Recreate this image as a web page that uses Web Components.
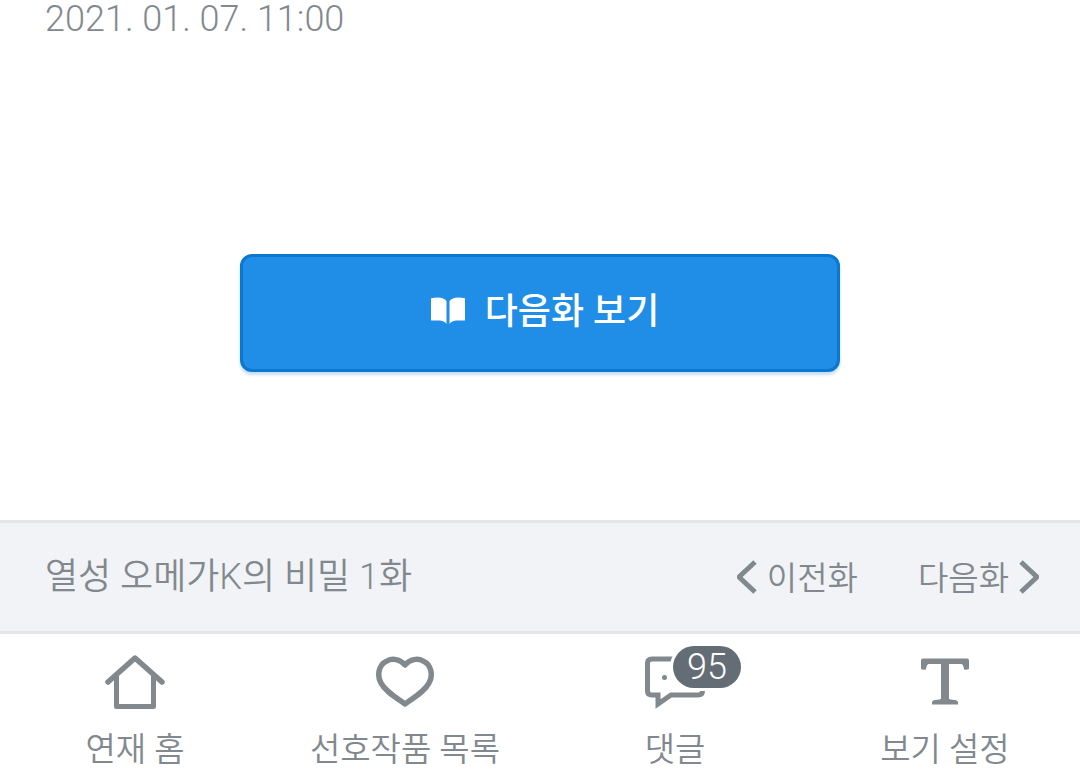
<!DOCTYPE html>
<html lang="ko">
<head>
<meta charset="UTF-8">
<meta name="viewport" content="width=device-width, initial-scale=1">
<title>열성 오메가K의 비밀 1화</title>
<style>
    body {
        margin: 0;
        --gray: #81898f;
        --line: #e4e5e9;
        --bar: #f2f3f6;
        color: var(--gray);
        background: #fff;
        font-family: Roboto, "Noto Sans CJK KR", sans-serif;
        font-weight: 350;
    }
</style>
</head>
<body>
<episode-viewer>
    <time slot="date" datetime="2021-01-07T11:00">2021. 01. 07. 11:00</time>
    <next-button slot="next">다음화 보기</next-button>
    <episode-bar slot="footer">
        <span slot="title">열성 오메가K의 비밀 1화</span>
        <episode-link slot="nav" dir-icon="prev">이전화</episode-link>
        <episode-link slot="nav" dir-icon="next">다음화</episode-link>
    </episode-bar>
    <viewer-menu slot="footer">
        <menu-item icon="home">연재 홈</menu-item>
        <menu-item icon="heart">선호작품 목록</menu-item>
        <menu-item icon="comment" count="95">댓글</menu-item>
        <menu-item icon="text">보기 설정</menu-item>
    </viewer-menu>
</episode-viewer>

<script>
const MENU_ICONS = {
    home: `
        <path d="M3 28 30 4l27 24" fill="none" stroke="currentColor" stroke-width="5.5" stroke-linecap="round" stroke-linejoin="round"/>
        <path d="M11.5 22v30.500h37V22" fill="none" stroke="currentColor" stroke-width="5" stroke-linejoin="round"/>`,
    heart: `
        <path d="M30 11C25 5 17 4 12 7 3 11 2 22 6 29c4 8 14 14 24 21 10-7 20-13 24-21 4-7 3-18-6-22-5-3-13-2-18 4z" fill="none" stroke="currentColor" stroke-width="5.5" stroke-linejoin="round"/>`,
    comment: `
        <path d="M32 5H7Q2.500 5 2.500 9v28q0 4 4.500 4h6v9l13-9h27q4.500 0 4.500-4v-3" fill="none" stroke="currentColor" stroke-width="5"/>
        <circle cx="19.500" cy="23.500" r="2.500" fill="currentColor"/>
        <circle cx="31" cy="23.500" r="2.500" fill="currentColor"/>`,
    text: `
        <path d="M8 4.500h44q2 0 2 2v8.500q-2 1-5 .5-.5-5.500-3-5.500H34v34.500q0 1 6 1.500 3 .5 3 2.500v2H17v-2q0-2 3-2.500 6-.5 6-1.500V10H14q-2.500 0-3 5.500-3 .5-5-.5V6.500q0-2 2-2z" fill="currentColor"/>`
};

class EpisodeViewer extends HTMLElement {
    constructor() {
        super();
        this.attachShadow({ mode: 'open' });
    }

    connectedCallback() {
        this.shadowRoot.innerHTML = `
        <style>
            :host { display: flex; flex-direction: column; min-height: 100vh; }
            main { flex: 1; display: flex; flex-direction: column; }
            .date { padding: 0 45px; font-size: 36px; line-height: 38px; }
            .next { display: flex; justify-content: center; padding: 216px 24px 48px; }
        </style>
        <main>
            <div class="date"><slot name="date"></slot></div>
            <div class="next"><slot name="next"></slot></div>
        </main>
        <footer><slot name="footer"></slot></footer>
        `;
    }
}

class NextButton extends HTMLElement {
    constructor() {
        super();
        this.attachShadow({ mode: 'open' });
    }

    connectedCallback() {
        this.shadowRoot.innerHTML = `
        <style>
            :host { display: block; width: 100%; max-width: 600px; }
            button { display: flex; align-items: center; justify-content: center; gap: 20px; width: 100%; padding: 31px 16px 33px 26px; border: 3px solid #0b78d0; border-radius: 12px; background: #208de6; box-shadow: 0 3px 3px #c5dff6; color: #fff; font-family: inherit; font-weight: 500; font-size: 36px; line-height: 48px; box-sizing: border-box; cursor: pointer; }
            button:hover { background: #1983da; }
            svg { width: 34px; height: 30px; }
        </style>
        <button type="button">
            <svg viewBox="0 0 34 30" fill="currentColor" aria-hidden="true">
                <path d="M0 2Q0 1 1 1q11-2 14.500 3v23q-2-3.500-7.500-3.500H0zM34 2q0-1-1-1-11-2-14.500 3v23q2-3.500 7.500-3.500h8z"/>
            </svg>
            <span><slot></slot></span>
        </button>
        `;
    }
}

class EpisodeBar extends HTMLElement {
    constructor() {
        super();
        this.attachShadow({ mode: 'open' });
    }

    connectedCallback() {
        this.shadowRoot.innerHTML = `
        <style>
            :host { display: flex; align-items: center; justify-content: space-between; gap: 24px; padding: 30px 41px 30px 45px; border-top: 3px solid var(--line); border-bottom: 3px solid var(--line); background: var(--bar); }
            .title { font-size: 36px; line-height: 48px; }
            nav { display: flex; gap: 60px; }
        </style>
        <div class="title"><slot name="title"></slot></div>
        <nav><slot name="nav"></slot></nav>
        `;
    }
}

class EpisodeLink extends HTMLElement {
    constructor() {
        super();
        this.attachShadow({ mode: 'open' });
    }

    connectedCallback() {
        const next = this.getAttribute('dir-icon') === 'next';
        const arrow = next ? 'M2 2l16 15L2 32' : 'M18 2 2 17l16 15';
        const svg = `<svg viewBox="0 0 20 34" aria-hidden="true"><path d="${arrow}" fill="none" stroke="currentColor" stroke-width="5"/></svg>`;
        this.shadowRoot.innerHTML = `
        <style>
            :host { display: block; }
            a { display: flex; align-items: center; gap: 10px; color: inherit; text-decoration: none; font-size: 33px; line-height: 44px; }
            span { padding-top: 4px; }
            svg { width: 20px; height: 34px; }
        </style>
        <a href="#">${next ? '' : svg}<span><slot></slot></span>${next ? svg : ''}</a>
        `;
    }
}

class ViewerMenu extends HTMLElement {
    constructor() {
        super();
        this.attachShadow({ mode: 'open' });
    }

    connectedCallback() {
        this.shadowRoot.innerHTML = `
        <style>
            :host { display: block; background: #fff; }
            nav { display: grid; grid-template-columns: repeat(4, 1fr); }
        </style>
        <nav><slot></slot></nav>
        `;
    }
}

class MenuItem extends HTMLElement {
    constructor() {
        super();
        this.attachShadow({ mode: 'open' });
    }

    connectedCallback() {
        const count = this.getAttribute('count');
        this.shadowRoot.innerHTML = `
        <style>
            :host { display: block; }
            a { display: flex; flex-direction: column; align-items: center; gap: 16px; padding: 20px 0 6px; color: inherit; text-decoration: none; font-size: 33px; line-height: 48px; }
            .icon { position: relative; width: 60px; height: 56px; }
            svg { display: block; width: 60px; height: 56px; }
            .badge { position: absolute; left: 28px; top: -8px; padding: 0 14px; border-radius: 24px; background: #646d75; box-shadow: 0 0 0 3px #fff; color: #fff; font-size: 36px; line-height: 42px; }
        </style>
        <a href="#">
            <span class="icon">
                <svg viewBox="0 0 60 56" aria-hidden="true">${MENU_ICONS[this.getAttribute('icon')]}</svg>
                ${count ? `<span class="badge">${count}</span>` : ''}
            </span>
            <span><slot></slot></span>
        </a>
        `;
    }
}

customElements.define('episode-viewer', EpisodeViewer);
customElements.define('next-button', NextButton);
customElements.define('episode-bar', EpisodeBar);
customElements.define('episode-link', EpisodeLink);
customElements.define('viewer-menu', ViewerMenu);
customElements.define('menu-item', MenuItem);
</script>
</body>
</html>
